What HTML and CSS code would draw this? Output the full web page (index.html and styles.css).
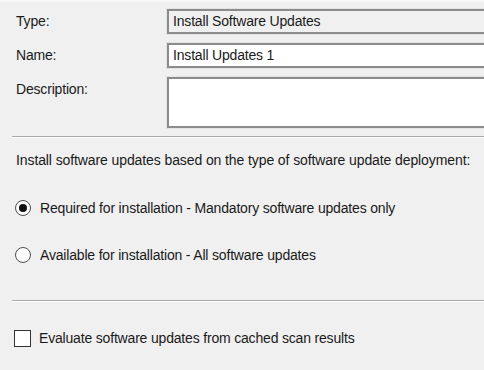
FILE: index.html
```html
<!DOCTYPE html>
<html>
<head>
<meta charset="utf-8">
<link rel="stylesheet" href="styles.css">
</head>
<body>
<div class="page">
  <div class="fields">
    <div class="label">Type:</div>
    <div class="box box-ro">Install Software Updates</div>
    <div class="label">Name:</div>
    <div class="box">Install Updates 1</div>
    <div class="label">Description:</div>
    <div class="box box-desc"></div>
  </div>
  <div class="sep"></div>
  <p class="intro">Install software updates based on the type of software update deployment:</p>
  <div class="option option-first">
    <span class="radio checked"></span>
    <span>Required for installation - Mandatory software updates only</span>
  </div>
  <div class="option">
    <span class="radio"></span>
    <span>Available for installation - All software updates</span>
  </div>
  <div class="sep sep2"></div>
  <div class="option option-check">
    <span class="check"></span>
    <span>Evaluate software updates from cached scan results</span>
  </div>
</div>
</body>
</html>
```
FILE: styles.css
```css
html, body {
  margin: 0;
  padding: 0;
  background: #f0f0f0;
  overflow: hidden;
}
.page {
  width: 484px;
  height: 370px;
  font-family: "Liberation Sans", Arial, sans-serif;
  font-size: 14px;
  letter-spacing: -0.18px;
  color: #1a1a1a;
  display: flex;
  flex-direction: column;
  border-top: 2px solid #f7f7f7;
  box-sizing: border-box;
}
.fields {
  display: grid;
  grid-template-columns: 151px 330px;
  row-gap: 9px;
  padding: 7px 0 0 16px;
}
.label {
  line-height: 25px;
  height: 25px;
}
.box {
  height: 25px;
  box-sizing: border-box;
  border: 2px solid #8c8c8c;
  box-shadow: 0 0 0 1px #e2e2e2;
  background: #fff;
  padding: 0 4px;
  line-height: 21px;
  white-space: nowrap;
}
.box-ro {
  background: #f0f0f0;
}
.box-desc {
  height: 51px;
}
.sep {
  margin: 8px 0 0 12px;
  height: 1px;
  background: #a8a8a8;
  border-bottom: 1px solid #fff;
}
.intro {
  margin: 12px 0 0 16px;
  line-height: 20px;
  white-space: nowrap;
  letter-spacing: -0.1px;
}
.option {
  display: flex;
  align-items: center;
  gap: 9px;
  padding-left: 15px;
  height: 20px;
  margin-top: 27px;
  white-space: nowrap;
}
.option-first {
  margin-top: 28px;
}
.radio {
  width: 14px;
  height: 14px;
  border: 1px solid #4d4d4d;
  border-radius: 50%;
  background: #fff;
  box-sizing: content-box;
  position: relative;
  flex: none;
}
.radio.checked::after {
  content: "";
  position: absolute;
  left: 3px;
  top: 3px;
  width: 8px;
  height: 8px;
  border-radius: 50%;
  background: #111;
}
.sep2 {
  margin-top: 35px;
}
.option-check {
  margin-top: 26px;
  padding-left: 14px;
  gap: 8px;
}
.check {
  width: 15px;
  height: 15px;
  border: 1px solid #333;
  background: #fff;
  flex: none;
}
```
